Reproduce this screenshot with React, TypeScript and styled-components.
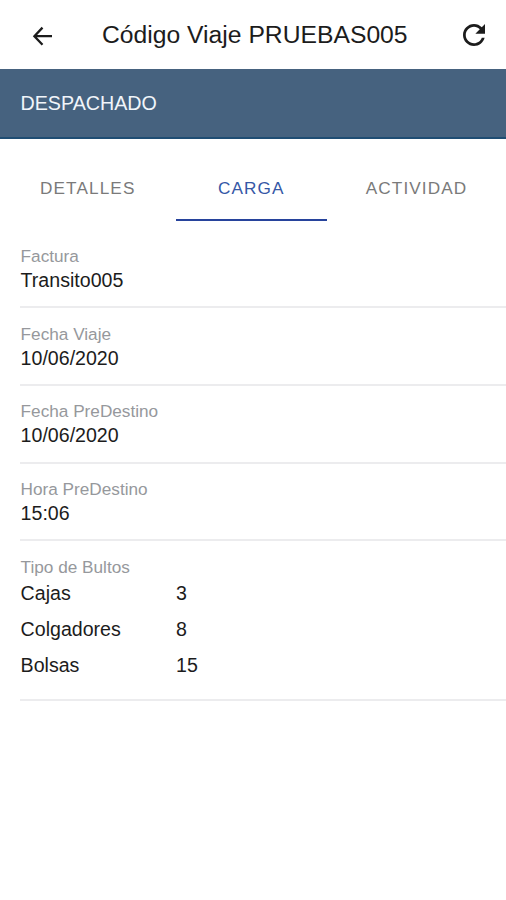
import React from "react";
import styled, { createGlobalStyle } from "styled-components";

const GlobalStyle = createGlobalStyle`
  * { box-sizing: border-box; }
  body { margin: 0; background: #fff; }
`;

const Screen = styled.div`
  display: flex;
  flex-direction: column;
  width: 100%;
  min-height: 900px;
  background: #fff;
  color: #1c1c1c;
  font-family: "Liberation Sans", Arial, sans-serif;
`;

const Toolbar = styled.header`
  display: flex;
  align-items: center;
  height: 69px;
  padding: 0 16px 0 26px;
`;

const IconButton = styled.button`
  display: flex;
  padding: 0;
  border: 0;
  background: none;
  color: #1c1c1c;
`;

const Title = styled.h1`
  flex: 1;
  margin: 0 0 0 43px;
  font-size: 24.7px;
  font-weight: 400;
  line-height: 30px;
  white-space: nowrap;
`;

const StatusBar = styled.div`
  height: 70px;
  padding: 0 20.5px;
  border-bottom: 2px solid #1f4d73;
  background: #46627f;
  color: #f1f5fa;
  font-size: 19.7px;
  line-height: 69px;
`;

const Tabs = styled.nav`
  display: grid;
  grid-template-columns: 175.500px 151.500px 179px;
  height: 81.5px;
`;

const Tab = styled.button<{ $active?: boolean }>`
  padding: 19px 0 0;
  border: 0;
  border-bottom: 2px solid ${(p) => (p.$active ? "#27439c" : "transparent")};
  background: none;
  color: ${(p) => (p.$active ? "#3557a6" : "#7a7a7a")};
  font: 17.2px "Liberation Sans", Arial, sans-serif;
  letter-spacing: 1.1px;
`;

const List = styled.main`
  padding: 10px 0 0 20px;
`;

const Item = styled.section`
  height: 77.7px;
  padding: 14.5px 0 0 0.6px;
  border-bottom: 2px solid #ececee;
`;

const LoadItem = styled(Item)`
  height: 160px;
`;

const Label = styled.div`
  color: #96989c;
  font-size: 17.2px;
  line-height: 22px;
`;

const Value = styled.div`
  font-size: 19.6px;
  line-height: 26px;
`;

const LoadTable = styled.div`
  margin-top: -3px;
`;

const LoadRow = styled.div`
  display: grid;
  grid-template-columns: 155.4px 1fr;
  font-size: 19.6px;
  line-height: 36.3px;
`;

const fields = [
  ["Factura", "Transito005"],
  ["Fecha Viaje", "10/06/2020"],
  ["Fecha PreDestino", "10/06/2020"],
  ["Hora PreDestino", "15:06"],
];

const loads = [
  ["Cajas", "3"],
  ["Colgadores", "8"],
  ["Bolsas", "15"],
];

export default function App() {
  return (
    <>
      <GlobalStyle />
      <Screen>
        <Toolbar>
          <IconButton aria-label="Volver">
            <svg width="33" height="33" viewBox="0 0 33 33" fill="none" stroke="currentColor" strokeWidth="2.3">
              <path d="M26 18.200H8.800M16.500 9.600L8.400 18.200L16.500 26.800" />
            </svg>
          </IconButton>
          <Title>Código Viaje PRUEBAS005</Title>
          <IconButton aria-label="Actualizar">
            <svg width="32" height="32" viewBox="0 0 512 512" fill="currentColor">
              <path d="M256 388c-72.600 0-132-59.400-132-132s59.400-132 132-132c36.300 0 69.300 15.400 92.400 39.600L278 234h154V80l-51.700 51.700C348.400 99.800 304.400 80 256 80c-96.800 0-176 79.200-176 176s79.200 176 176 176c81.500 0 150.300-56.100 170.200-132h-46c-18.100 51.300-67 88-124.200 88z" />
            </svg>
          </IconButton>
        </Toolbar>
        <StatusBar>DESPACHADO</StatusBar>
        <Tabs>
          <Tab>DETALLES</Tab>
          <Tab $active>CARGA</Tab>
          <Tab>ACTIVIDAD</Tab>
        </Tabs>
        <List>
          {fields.map(([label, value]) => (
            <Item key={label}>
              <Label>{label}</Label>
              <Value>{value}</Value>
            </Item>
          ))}
          <LoadItem>
            <Label>Tipo de Bultos</Label>
            <LoadTable>
              {loads.map(([name, count]) => (
                <LoadRow key={name}>
                  <span>{name}</span>
                  <span>{count}</span>
                </LoadRow>
              ))}
            </LoadTable>
          </LoadItem>
        </List>
      </Screen>
    </>
  );
}
